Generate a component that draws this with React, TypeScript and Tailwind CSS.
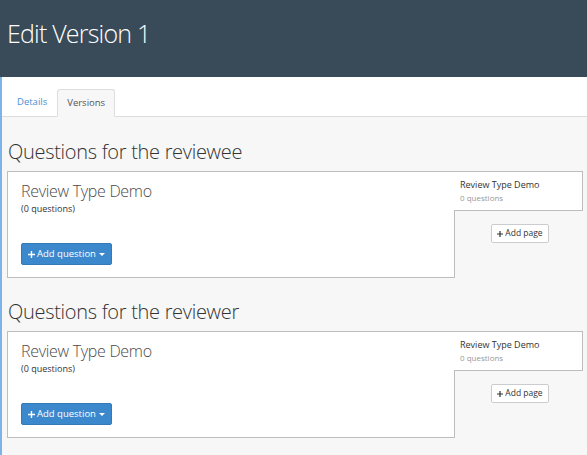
import React from "react";

const font = { fontFamily: '"Open Sans", "Liberation Sans", sans-serif' };

function PlusIcon({ className = "" }: { className?: string }) {
  return (
    <svg viewBox="0 0 10 10" className={className} fill="currentColor">
      <path d="M4 0h2v4h4v2H6v4H4V6H0V4h4z" />
    </svg>
  );
}

function QuestionSection({ heading }: { heading: string }) {
  return (
    <section className="mb-[21px]">
      <h2 className="text-[20px] font-light tracking-[-0.3px] text-[#333] leading-[26px] mb-[6px] pl-px">
        {heading}
      </h2>
      <div className="flex">
        <div className="flex-1 bg-white border border-[#bdbdbd] h-[107px] pl-[13px] pt-[8px]">
          <p className="text-[16px] font-light tracking-[-0.3px] text-[#4a4a4a] leading-[22px]">Review Type Demo</p>
          <p className="text-[9px] text-[#333] leading-[12px] mt-[1px]">(0 questions)</p>
          <button className="mt-[28px] flex items-center gap-[2px] h-[22px] px-[6px] whitespace-nowrap bg-[#3c88cd] border border-[#3479b8] rounded-[2px] text-white text-[9.5px] leading-none">
            <PlusIcon className="w-[7px] h-[7px]" />
            <span>Add question</span>
            <span className="ml-[1px] border-l-[3px] border-r-[3px] border-t-[3px] border-l-transparent border-r-transparent border-t-white" />
          </button>
        </div>
        <div className="w-[128px] flex flex-col items-center">
          <div className="self-stretch -ml-px relative bg-white border border-l-0 border-[#bdbdbd] h-[40px] pl-[6px] pt-[7px]">
            <p className="text-[9px] text-[#333] leading-[12px]">Review Type Demo</p>
            <p className="text-[8px] text-[#999] leading-[12px] mt-[1px]">0 questions</p>
          </div>
          <button className="mt-[13px] ml-[2px] flex items-center gap-[2px] h-[19px] px-[5px] whitespace-nowrap bg-white border border-[#ccc] rounded-[2px] text-[#333] text-[8.5px] leading-none">
            <PlusIcon className="w-[6px] h-[6px]" />
            <span>Add page</span>
          </button>
        </div>
      </div>
    </section>
  );
}

export default function App() {
  return (
    <div style={font} className="w-[587px] h-[455px] overflow-hidden bg-[#f7f7f7]">
      <header className="h-[77px] bg-[#394b59] pl-[7px] pt-[17px]">
        <h1 className="text-[25px] font-light tracking-[-0.8px] text-white leading-[32px]">Edit Version 1</h1>
      </header>
      <div className="border-l-2 border-[#7db4e8] h-[378px]">
        <div className="bg-white pt-[12px] border-b border-[#ddd] flex pl-[6px]">
          <a className="px-[9px] h-[27px] flex items-center text-[9.5px] text-[#4a8fd0]">Details</a>
          <a className="ml-[1px] px-[9px] h-[28px] -mb-px flex items-center text-[9.5px] text-[#555] bg-[#f7f7f7] border border-[#ddd] border-b-[#f7f7f7] rounded-t-[3px]">
            Versions
          </a>
        </div>
        <div className="pl-[5px] pr-[4px] pt-[22px]">
          <QuestionSection heading="Questions for the reviewee" />
          <QuestionSection heading="Questions for the reviewer" />
        </div>
      </div>
    </div>
  );
}
